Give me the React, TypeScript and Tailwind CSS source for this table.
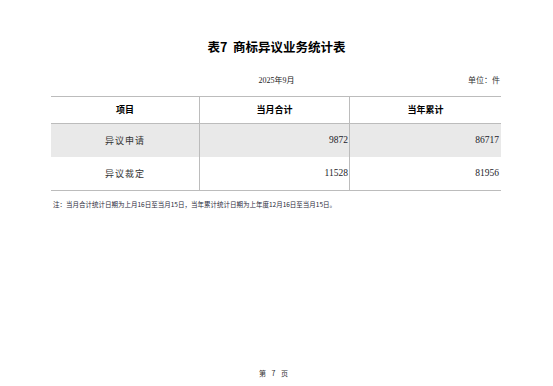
import React from "react";

const sans = { fontFamily: '"Noto Sans CJK SC", "Noto Sans", sans-serif' };
const serif = { fontFamily: '"Liberation Serif", "Noto Sans CJK SC", serif' };

export default function App() {
  const rows = [
    { name: "异议申请", m: "9872", y: "86717", bg: "bg-[#e9e9e9]" },
    { name: "异议裁定", m: "11528", y: "81956", bg: "bg-white" },
  ];
  return (
    <div className="w-[553px] h-[386px] bg-white flex flex-col relative overflow-hidden">
      <div className="h-[38px]" />
      <div
        className="text-center text-[12.5px] font-bold text-black leading-[18px]"
        style={sans}
      >
        表7&nbsp; 商标异议业务统计表
      </div>
      <div className="h-[19px]" />
      <div className="relative h-[12px] mx-[51px]">
        <div
          className="absolute left-0 right-0 text-center text-[8px] leading-[12px] text-[#222]"
          style={serif}
        >
          2025年9月
        </div>
        <div
          className="absolute right-[2px] text-[8px] leading-[12px] text-[#333]"
          style={serif}
        >
          单位：件
        </div>
      </div>
      <div className="h-[9px]" />
      <div className="mx-[51px] w-[450px] border-t border-b border-[#bcbcbc]">
        <div className="flex h-[27px] border-b border-[#bcbcbc]" style={sans}>
          <div className="w-[149px] flex items-center justify-center text-[9px] font-bold text-black border-r border-[#bcbcbc]">
            项目
          </div>
          <div className="w-[150px] flex items-center justify-center text-[9px] font-bold text-black border-r border-[#bcbcbc]">
            当月合计
          </div>
          <div className="flex-1 flex items-center justify-center text-[9px] font-bold text-black">
            当年累计
          </div>
        </div>
        {rows.map((r) => (
          <div key={r.name} className={`flex h-[33px] ${r.bg}`}>
            <div
              className="w-[149px] flex items-center justify-center text-[9px] tracking-[1px] text-[#333] border-r border-[#bcbcbc]"
              style={sans}
            >
              {r.name}
            </div>
            <div
              className="w-[150px] flex items-center justify-end pr-[1px] text-[9.5px] text-[#1c1c2a] border-r border-[#bcbcbc]"
              style={serif}
            >
              {r.m}
            </div>
            <div
              className="flex-1 flex items-center justify-end pr-[2px] text-[9.5px] text-[#1c1c2a]"
              style={serif}
            >
              {r.y}
            </div>
          </div>
        ))}
      </div>
      <div className="h-[9px]" />
      <div className="ml-[53px] text-[6.5px] leading-[9px] text-[#2a2a3a]" style={sans}>
        注：当月合计统计日期为上月16日至当月15日，当年累计统计日期为上年度12月16日至当月15日。
      </div>
      <div className="flex-1" />
      <div className="text-center text-[7px] leading-[10px] text-[#333] pb-[8px] pr-[4px] tracking-[2px]" style={sans}>
        第&nbsp;7&nbsp;页
      </div>
    </div>
  );
}
